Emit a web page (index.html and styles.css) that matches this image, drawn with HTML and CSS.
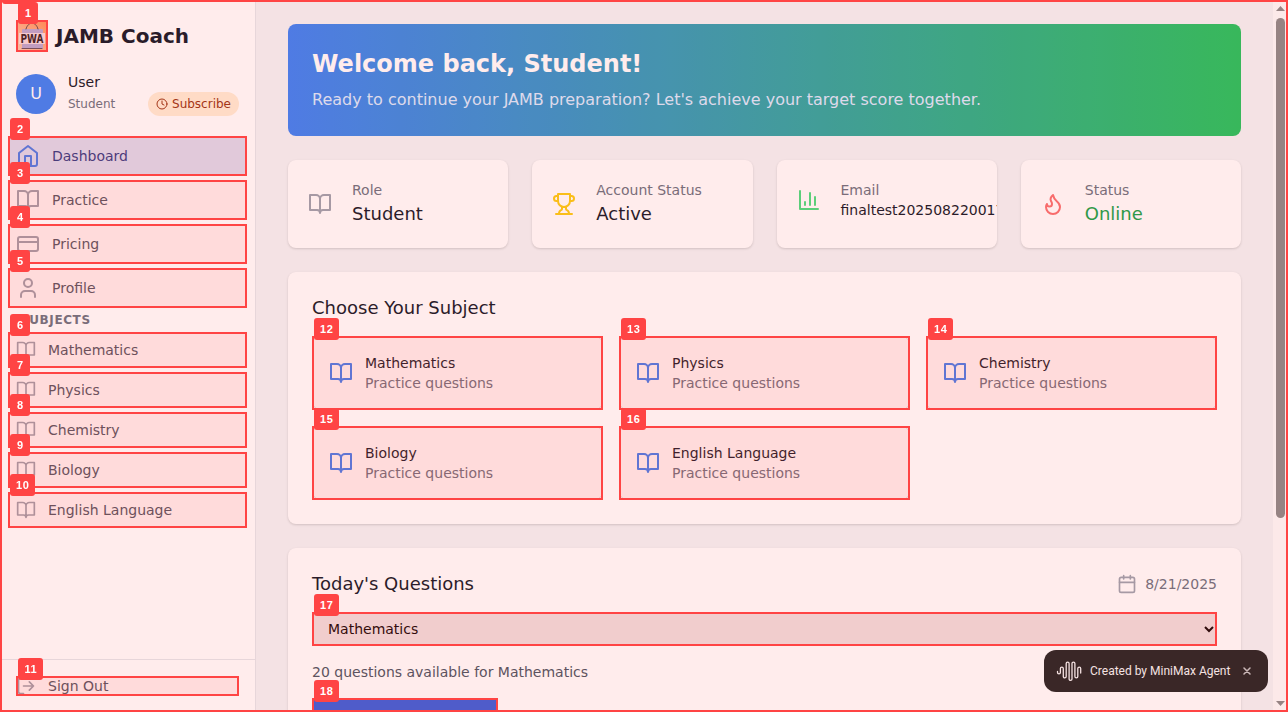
FILE: index.html
```html
<!DOCTYPE html>
<html lang="en">
<head>
<meta charset="utf-8">
<title>JAMB Coach</title>
<link rel="stylesheet" href="styles.css">
</head>
<body>
<svg class="defs" aria-hidden="true">
  <symbol id="book" viewBox="0 0 24 24"><path d="M2 3h6a4 4 0 0 1 4 4v14a3 3 0 0 0-3-3H2zM22 3h-6a4 4 0 0 0-4 4v14a3 3 0 0 1 3-3h7z"/></symbol>
  <symbol id="home" viewBox="0 0 24 24"><path d="m3 9 9-7 9 7v11a2 2 0 0 1-2 2H5a2 2 0 0 1-2-2z"/><path d="M9 22V12h6v10"/></symbol>
  <symbol id="card" viewBox="0 0 24 24"><rect x="2" y="5" width="20" height="14" rx="2"/><path d="M2 10h20"/></symbol>
  <symbol id="user" viewBox="0 0 24 24"><path d="M19 21v-2a4 4 0 0 0-4-4H9a4 4 0 0 0-4 4v2"/><circle cx="12" cy="7" r="4"/></symbol>
  <symbol id="logout" viewBox="0 0 24 24"><path d="M9 21H5a2 2 0 0 1-2-2V5a2 2 0 0 1 2-2h4M16 17l5-5-5-5M21 12H9"/></symbol>
  <symbol id="clock" viewBox="0 0 24 24"><circle cx="12" cy="12" r="10"/><path d="M12 6v6l4 2"/></symbol>
  <symbol id="trophy" viewBox="0 0 24 24"><path d="M6 9H4.500a2.500 2.500 0 0 1 0-5H6M18 9h1.500a2.500 2.500 0 0 0 0-5H18M4 22h16M10 14.660V17c0 .55-.47.98-.97 1.210C7.850 18.750 7 20.240 7 22M14 14.660V17c0 .55.47.98.97 1.210C16.150 18.750 17 20.240 17 22M18 2H6v7a6 6 0 0 0 12 0V2Z"/></symbol>
  <symbol id="chart" viewBox="0 0 24 24"><path d="M3 3v18h18M18 17V9M13 17V5M8 17v-3"/></symbol>
  <symbol id="flame" viewBox="0 0 24 24"><path d="M8.500 14.500A2.500 2.500 0 0 0 11 12c0-1.380-.5-2-1-3-1.072-2.143-.224-4.054 2-6 .5 2.500 2 4.900 4 6.500 2 1.600 3 3.500 3 5.500a7 7 0 1 1-14 0c0-1.153.433-2.294 1-3a2.500 2.500 0 0 0 2.500 2.500z"/></symbol>
  <symbol id="calendar" viewBox="0 0 24 24"><rect x="3" y="4" width="18" height="18" rx="2"/><path d="M8 2v4M16 2v4M3 10h18"/></symbol>
</svg>

<div class="app">
  <aside class="sidebar">
    <div class="brand">
      <div class="mark logo">
        <svg width="32" height="32" viewBox="0 0 32 32">
          <defs><linearGradient id="sun" x1="1" y1="0" x2="0" y2="1"><stop offset="0" stop-color="#ff9858"/><stop offset="1" stop-color="#f9dcc0"/></linearGradient></defs>
          <rect width="32" height="32" fill="url(#sun)"/>
          <rect x="6" y="9" width="21" height="20" rx="1" fill="#b4b3df"/>
          <path d="M6 28.500h20" stroke="#5d5360" stroke-width="1"/>
          <path d="M10 9c1-4 4-6 6-6s5 2 6 6" fill="none" stroke="#4a4448" stroke-width="1"/>
          <rect x="3" y="13" width="26" height="11" fill="#f6e9ee"/>
          <text x="4.500" y="23" class="logo-text" textLength="23" lengthAdjust="spacingAndGlyphs">PWA</text>
        </svg>
        <span class="tag">1</span>
      </div>
      <span class="brand-name">JAMB Coach</span>
    </div>
    <div class="account">
      <div class="avatar">U</div>
      <div class="account-info">
        <div class="account-name">User</div>
        <div class="account-row"><span>Student</span>
          <span class="subscribe"><svg class="i12"><use href="#clock"/></svg>Subscribe</span></div>
      </div>
    </div>
    <nav class="nav">
      <a class="mark active"><svg class="i24"><use href="#home"/></svg>Dashboard<span class="tag">2</span></a>
      <a class="mark"><svg class="i24"><use href="#book"/></svg>Practice<span class="tag">3</span></a>
      <a class="mark"><svg class="i24"><use href="#card"/></svg>Pricing<span class="tag">4</span></a>
      <a class="mark"><svg class="i24"><use href="#user"/></svg>Profile<span class="tag">5</span></a>
    </nav>
    <h3 class="nav-title">SUBJECTS</h3>
    <nav class="nav nav-small">
      <a class="mark"><svg class="i20"><use href="#book"/></svg>Mathematics<span class="tag">6</span></a>
      <a class="mark"><svg class="i20"><use href="#book"/></svg>Physics<span class="tag">7</span></a>
      <a class="mark"><svg class="i20"><use href="#book"/></svg>Chemistry<span class="tag">8</span></a>
      <a class="mark"><svg class="i20"><use href="#book"/></svg>Biology<span class="tag">9</span></a>
      <a class="mark"><svg class="i20"><use href="#book"/></svg>English Language<span class="tag wide">10</span></a>
    </nav>
    <div class="sidebar-foot">
      <a class="mark signout"><svg class="i20"><use href="#logout"/></svg>Sign Out<span class="tag wide">11</span></a>
    </div>
  </aside>

  <main class="main">
    <header class="hero">
      <h1>Welcome back, Student!</h1>
      <p>Ready to continue your JAMB preparation? Let's achieve your target score together.</p>
    </header>

    <div class="stats">
      <div class="card stat"><div class="stat-body"><svg class="i24 gray"><use href="#book"/></svg><div><div class="label">Role</div><div class="value">Student</div></div></div></div>
      <div class="card stat"><div class="stat-body"><svg class="i24 gold"><use href="#trophy"/></svg><div><div class="label">Account Status</div><div class="value">Active</div></div></div></div>
      <div class="card stat"><div class="stat-body"><svg class="i24 lime"><use href="#chart"/></svg><div><div class="label">Email</div><div class="value email">finaltest20250822001711</div></div></div></div>
      <div class="card stat"><div class="stat-body"><svg class="i24 coral"><use href="#flame"/></svg><div><div class="label">Status</div><div class="value online">Online</div></div></div></div>
    </div>

    <section class="card panel">
      <h2>Choose Your Subject</h2>
      <div class="subjects">
        <a class="mark subject"><svg class="i24"><use href="#book"/></svg><div><div>Mathematics</div><div class="hint">Practice questions</div></div><span class="tag wide">12</span></a>
        <a class="mark subject"><svg class="i24"><use href="#book"/></svg><div><div>Physics</div><div class="hint">Practice questions</div></div><span class="tag wide">13</span></a>
        <a class="mark subject"><svg class="i24"><use href="#book"/></svg><div><div>Chemistry</div><div class="hint">Practice questions</div></div><span class="tag wide">14</span></a>
        <a class="mark subject"><svg class="i24"><use href="#book"/></svg><div><div>Biology</div><div class="hint">Practice questions</div></div><span class="tag wide">15</span></a>
        <a class="mark subject"><svg class="i24"><use href="#book"/></svg><div><div>English Language</div><div class="hint">Practice questions</div></div><span class="tag wide">16</span></a>
      </div>
    </section>

    <section class="card panel last">
      <div class="panel-head">
        <h2>Today's Questions</h2>
        <div class="date"><svg class="i20 gray"><use href="#calendar"/></svg>8/21/2025</div>
      </div>
      <div class="mark picker"><select><option>Mathematics</option></select><span class="tag wide">17</span></div>
      <p class="available">20 questions available for Mathematics</p>
      <div class="mark start"><span class="tag wide">18</span></div>
    </section>
  </main>

  <div class="scrollbar">
    <svg width="9" height="5" viewBox="0 0 9 5"><path d="M0 5 4.500 0 9 5z"/></svg>
    <div class="track"><div class="thumb"></div></div>
    <svg width="9" height="5" viewBox="0 0 9 5"><path d="M0 0h9L4.500 5z"/></svg>
  </div>
</div>

<div class="credit">
  <svg width="26" height="22" viewBox="0 0 26 22"><path d="M1.500 11.500v1a1.450 1.450 0 0 0 2.900 0V8.500a1.450 1.450 0 0 1 2.900 0v8a1.450 1.450 0 0 0 2.900 0V3.500a1.450 1.450 0 0 1 2.900 0v15.500a1.450 1.450 0 0 0 2.900 0V3.500a1.450 1.450 0 0 1 2.900 0v13a1.450 1.450 0 0 0 2.900 0V8.500a1.450 1.450 0 0 1 2.900 0v4.500"/></svg>
  <span>Created by MiniMax Agent</span>
  <svg class="close" width="8" height="8" viewBox="0 0 8 8"><path d="m1 1 6 6M7 1 1 7"/></svg>
</div>
<div class="frame"></div>
<div class="root-tag"></div>
</body>
</html>
```
FILE: styles.css
```css
* { box-sizing: border-box; }
body {
  margin: 0;
  height: 712px;
  overflow: hidden;
  font: 14px/20px "DejaVu Sans", sans-serif;
  color: #111827;
}
h1, h2, h3, p { margin: 0; font-weight: 400; }
svg { flex: none; fill: none; stroke: currentColor; stroke-width: 2; stroke-linecap: round; stroke-linejoin: round; display: block; }
.defs { position: absolute; width: 0; height: 0; }
.i12 { width: 12px; height: 12px; }
.i20 { width: 20px; height: 20px; }
.i24 { width: 24px; height: 24px; }
.gray { color: #9ca3af; }
.gold { color: #facc15; }
.lime { color: #4ade80; }
.coral { color: #f87171; }

.app { display: flex; height: 712px; overflow: hidden; background: #f3f4f6; }

/* Numbered highlight boxes */
.mark { position: relative; }
.mark::after {
  content: "";
  position: absolute;
  inset: 0;
  border: 2px solid #ff4444;
  background: rgba(255, 68, 68, .1);
  z-index: 10;
}
.tag {
  position: absolute;
  left: 2px;
  top: -18px;
  z-index: 20;
  width: 20px;
  height: 22px;
  padding-left: .6px;
  border-radius: 3px;
  background: #ff4444;
  color: #fff;
  font: bold 11px/22px "Liberation Sans", sans-serif;
  letter-spacing: .6px;
  text-align: center;
}
.tag.wide { width: 25px; }
.frame {
  position: fixed;
  inset: 0;
  z-index: 15;
  border: 2px solid #ff4444;
  background: rgba(255, 68, 68, .1);
}
.root-tag {
  position: fixed;
  left: 2px;
  top: 0;
  z-index: 16;
  width: 20px;
  height: 4px;
  border-radius: 0 0 3px 3px;
  background: #ff4444;
}

/* Sidebar */
.sidebar {
  width: 256px;
  flex: none;
  display: flex;
  flex-direction: column;
  background: #fff;
  border-right: 1px solid #e5e7eb;
}
.brand { display: flex; align-items: center; gap: 8px; padding: 20px 16px 0; }
.logo { width: 32px; height: 32px; }
.logo svg { stroke: none; }
.logo-text { font: bold 11.5px "DejaVu Sans", sans-serif; fill: #241c20; }
.brand-name { font-size: 20px; line-height: 28px; font-weight: 700; }
.account { display: flex; align-items: center; gap: 12px; padding: 20px 16px; }
.avatar {
  width: 40px;
  height: 40px;
  border-radius: 50%;
  background: #3b82f6;
  color: #fff;
  font-size: 16px;
  line-height: 40px;
  text-align: center;
}
.account-info { flex: 1; }
.account-row { display: flex; align-items: center; justify-content: space-between; font-size: 12px; line-height: 16px; color: #6b7280; }
.subscribe {
  display: flex;
  align-items: center;
  gap: 4px;
  padding: 4px 8px;
  border-radius: 12px;
  background: #ffedd5;
  color: #9a3412;
}
.nav { display: flex; flex-direction: column; gap: 4px; padding: 0 8px; }
.nav a { display: flex; align-items: center; gap: 12px; height: 40px; padding: 0 8px; color: #4b5563; }
.nav svg, .signout svg { color: #9ca3af; }
.nav-small a { height: 36px; }
.nav .active { background: #dbeafe; color: #1e3a8a; }
.nav .active svg { color: #3b82f6; }
.nav-title { height: 24px; padding: 4px 20px; font-size: 12px; line-height: 16px; font-weight: 700; letter-spacing: .6px; color: #6b7280; }
.sidebar-foot { margin-top: auto; padding: 16px; border-top: 1px solid #e5e7eb; }
.signout { display: flex; gap: 12px; color: #4b5563; }

/* Main column */
.main { flex: 1; min-width: 0; display: flex; flex-direction: column; gap: 24px; padding: 24px 32px 0; overflow: hidden; }
.hero { flex: none; padding: 24px; border-radius: 8px; background: linear-gradient(to right, #3b82f6, #22c55e); color: #fff; }
.hero h1 { font-size: 24px; line-height: 32px; font-weight: 700; margin-bottom: 8px; }
.hero p { font-size: 16px; line-height: 24px; color: #dbeafe; }
.card { flex: none; background: #fff; border-radius: 8px; box-shadow: 0 1px 3px rgba(0, 0, 0, .1), 0 1px 2px rgba(0, 0, 0, .06); }
.stats { flex: none; display: grid; grid-template-columns: repeat(4, minmax(0, 1fr)); gap: 24px; }
.stat { height: 88px; padding: 20px 0 20px 20px; overflow: hidden; }
.stat-body { display: flex; align-items: center; gap: 20px; }
.label { color: #6b7280; }
.value { font-size: 18px; line-height: 28px; }
.email { font-size: 14px; line-height: 20px; white-space: nowrap; }
.online { color: #16a34a; }
.panel { padding: 24px; }
.panel.last { padding-bottom: 0; border-radius: 8px 8px 0 0; }
.panel h2 { font-size: 18px; line-height: 24px; }
.subjects { display: grid; grid-template-columns: repeat(3, 1fr); gap: 16px; margin-top: 16px; }
.subject { display: flex; align-items: center; gap: 12px; height: 74px; padding: 0 16px; border: 1px solid #e5e7eb; border-radius: 8px; }
.subject::after { inset: -1px; }
.subject .tag { left: 1px; top: -19px; }
.subject svg { color: #3b82f6; }
.hint { color: #6b7280; }
.panel-head { display: flex; justify-content: space-between; align-items: center; margin-bottom: 16px; }
.date { display: flex; gap: 8px; color: #6b7280; }
.picker { height: 34px; }
.picker select { display: block; width: 100%; height: 34px; padding: 0 0 0 12px; border: 0; background: #efefef; color: #000; font: 14px "DejaVu Sans", sans-serif; }
.available { margin: 16px 0; color: #4b5563; }
.start { width: 186px; height: 14px; background: #2563eb; }

.scrollbar { width: 15px; flex: none; display: flex; flex-direction: column; align-items: center; padding: 6px 0; background: #fcfcfc; }
.scrollbar svg { fill: #8b8b8b; stroke: none; }
.track { flex: 1; padding-top: 7px; }
.thumb { width: 9px; height: 500px; border-radius: 5px; background: #8b8b8b; }

.credit {
  position: fixed;
  right: 20px;
  bottom: 20px;
  z-index: 12;
  width: 224px;
  height: 42px;
  display: flex;
  align-items: center;
  padding: 0 12px;
  border-radius: 12px;
  background: #242424;
  color: #f4f4f4;
  font: 12px/20px Roboto, sans-serif;
}
.credit svg { stroke-width: 1.3; }
.credit span { margin-left: 8px; white-space: nowrap; }
.credit .close { margin-left: auto; margin-right: 5px; stroke-width: 1.5; color: #c4c4c4; }
```
